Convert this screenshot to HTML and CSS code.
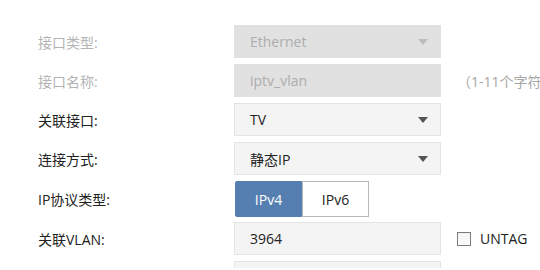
FILE: index.html
```html
<!DOCTYPE html>
<html lang="zh-CN">
<head>
<meta charset="utf-8">
<link rel="stylesheet" href="styles.css">
</head>
<body>
<div class="form">
  <div class="row">
    <div class="label disabled">接口类型:</div>
    <div class="field select is-disabled"><span>Ethernet</span><i class="arrow"></i></div>
  </div>
  <div class="row">
    <div class="label disabled">接口名称:</div>
    <div class="field is-disabled"><span>iptv_vlan</span></div>
    <div class="hint">（1-11个字符）</div>
  </div>
  <div class="row">
    <div class="label">关联接口:</div>
    <div class="field select"><span>TV</span><i class="arrow"></i></div>
  </div>
  <div class="row">
    <div class="label">连接方式:</div>
    <div class="field select"><span>静态IP</span><i class="arrow"></i></div>
  </div>
  <div class="row row-btn">
    <div class="label">IP协议类型:</div>
    <div class="seg">
      <div class="seg-btn active">IPv4</div>
      <div class="seg-btn">IPv6</div>
    </div>
  </div>
  <div class="row">
    <div class="label">关联VLAN:</div>
    <div class="field"><span>3964</span></div>
    <label class="check"><span class="box"></span>UNTAG</label>
  </div>
  <div class="row row-last">
    <div class="label"></div>
    <div class="field"></div>
  </div>
</div>
</body>
</html>
```

FILE: styles.css
```css
html, body {
  margin: 0;
  padding: 0;
  background: #ffffff;
  height: 270px;
  overflow: hidden;
}
body {
  font-family: "Open Sans", "Noto Sans CJK SC", sans-serif;
  font-size: 14px;
  color: #333333;
}
.form {
  padding-top: 25px;
}
.row {
  display: flex;
  align-items: center;
  height: 33px;
  margin-bottom: 6px;
  white-space: nowrap;
}
.row-btn {
  height: 36px;
  margin-bottom: 5px;
}
.row-last {
  height: 7px;
  align-items: flex-start;
  overflow: hidden;
}
.label {
  width: 234px;
  padding-left: 38px;
  box-sizing: border-box;
  color: #222222;
  flex: none;
}
.label.disabled {
  color: #b4b4b4;
}
.field {
  width: 207px;
  height: 33px;
  box-sizing: border-box;
  border: 1px solid #e4e4e4;
  background: #f4f4f4;
  display: flex;
  align-items: center;
  justify-content: space-between;
  padding: 0 12px 0 15px;
  color: #222222;
  flex: none;
}
.field.is-disabled {
  background: #e1e1e1;
  border-color: #e1e1e1;
  color: #adadad;
}
.arrow {
  width: 0;
  height: 0;
  border-left: 5px solid transparent;
  border-right: 5px solid transparent;
  border-top: 6px solid #555555;
}
.is-disabled .arrow {
  border-top-color: #bdbdbd;
}
.hint {
  margin-left: 16px;
  color: #a6a6a6;
}
.seg {
  display: flex;
  height: 36px;
  margin-left: 1px;
}
.seg-btn {
  width: 67px;
  box-sizing: border-box;
  display: flex;
  align-items: center;
  justify-content: center;
  border: 1px solid #b8b8b8;
  background: #ffffff;
  color: #222222;
}
.seg-btn.active {
  background: #557fb0;
  border-color: #557fb0;
  color: #ffffff;
  border-radius: 2px 0 0 2px;
}
.check {
  display: flex;
  align-items: center;
  margin-left: 16px;
  color: #222222;
}
.box {
  width: 14px;
  height: 14px;
  box-sizing: border-box;
  border: 1px solid #7a7a7a;
  background: linear-gradient(#f2f2f2, #ffffff);
  margin-right: 9px;
}
```
